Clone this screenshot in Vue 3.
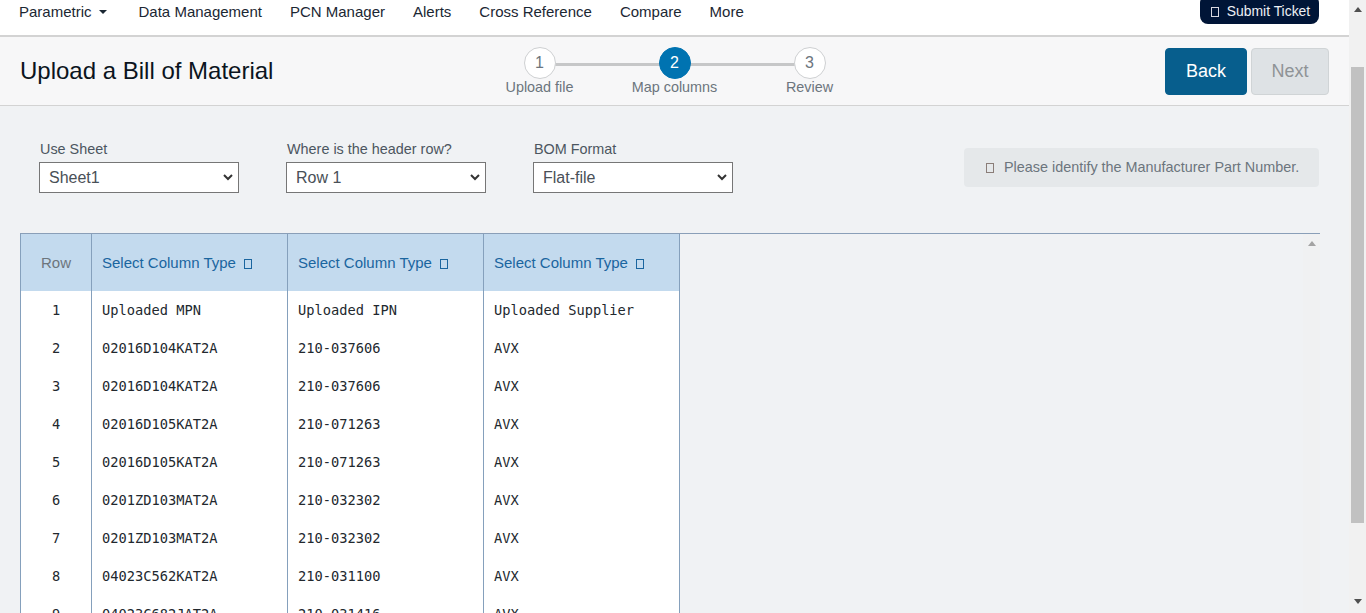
<script setup>
const navItems = ['Data Management', 'PCN Manager', 'Alerts', 'Cross Reference', 'Compare', 'More']

const steps = [
  { num: 1, label: 'Upload file' },
  { num: 2, label: 'Map columns', active: true },
  { num: 3, label: 'Review' },
]

const filters = [
  { label: 'Use Sheet', value: 'Sheet1' },
  { label: 'Where is the header row?', value: 'Row 1' },
  { label: 'BOM Format', value: 'Flat-file' },
]

const rows = [
  ['Uploaded MPN', 'Uploaded IPN', 'Uploaded Supplier'],
  ['02016D104KAT2A', '210-037606', 'AVX'],
  ['02016D104KAT2A', '210-037606', 'AVX'],
  ['02016D105KAT2A', '210-071263', 'AVX'],
  ['02016D105KAT2A', '210-071263', 'AVX'],
  ['0201ZD103MAT2A', '210-032302', 'AVX'],
  ['0201ZD103MAT2A', '210-032302', 'AVX'],
  ['04023C562KAT2A', '210-031100', 'AVX'],
  ['04023C682JAT2A', '210-031416', 'AVX'],
]
</script>

<template>
  <div class="shell">
    <div class="page">
      <nav class="topnav">
        <a class="nav-link">Parametric<span class="caret"></span></a>
        <a v-for="item in navItems" :key="item" class="nav-link">{{ item }}</a>
        <button class="ticket"><span class="tofu"></span>Submit Ticket</button>
      </nav>

      <header class="head">
        <h1>Upload a Bill of Material</h1>
        <ol class="stepper">
          <li v-for="step in steps" :key="step.num" class="step" :class="{ active: step.active }">
            <span class="circle">{{ step.num }}</span>
            <span class="step-label">{{ step.label }}</span>
          </li>
        </ol>
        <div class="actions">
          <button class="btn back">Back</button>
          <button class="btn next" disabled>Next</button>
        </div>
      </header>

      <main class="content">
        <div class="filters">
          <div v-for="f in filters" :key="f.label" class="field">
            <label>{{ f.label }}</label>
            <select>
              <option>{{ f.value }}</option>
            </select>
          </div>
          <div class="notice"><span class="tofu"></span>Please identify the Manufacturer Part Number.</div>
        </div>

        <div class="table-wrap">
          <table>
            <thead>
              <tr>
                <th class="row-col">Row</th>
                <th v-for="n in 3" :key="n">Select Column Type<span class="tofu"></span></th>
              </tr>
            </thead>
            <tbody>
              <tr v-for="(row, i) in rows" :key="i">
                <td class="row-col">{{ i + 1 }}</td>
                <td v-for="(cell, j) in row" :key="j">{{ cell }}</td>
              </tr>
            </tbody>
          </table>
          <div class="inner-scroll"><span class="arrow-up small"></span></div>
        </div>
      </main>
    </div>

    <div class="scrollbar">
      <span class="arrow-up"></span>
      <span class="thumb"></span>
      <span class="arrow-down"></span>
    </div>
  </div>
</template>

<style>
html, body {
  margin: 0;
  overflow: hidden;
}
</style>

<style scoped>
.shell {
  display: flex;
  height: 613px;
  overflow: hidden;
  font-family: "Liberation Sans", Arial, sans-serif;
  background: #f0f2f4;
}

.page {
  flex: 1;
  min-width: 0;
}

.topnav {
  display: flex;
  align-items: flex-start;
  gap: 28px;
  box-sizing: border-box;
  height: 37px;
  padding: 3px 30px 0 19px;
  background: #fff;
  border-bottom: 2px solid #d3d3d3;
}

.nav-link {
  font-size: 15px;
  line-height: 18px;
  color: #1b2733;
}

.caret {
  display: inline-block;
  margin: 0 4px 3px 7px;
  border-top: 4px solid #1b2733;
  border-left: 4px solid transparent;
  border-right: 4px solid transparent;
  vertical-align: middle;
}

.ticket {
  margin: -8px 0 0 auto;
  height: 29px;
  width: 119px;
  padding: 3px 0 0 2px;
  background: #001537;
  color: #eef1f5;
  border: 0;
  border-radius: 8px;
  font: 13.9px "Liberation Sans", Arial, sans-serif;
}

.ticket .tofu {
  margin-right: 8px;
  border-color: #d8d8e0;
}

.tofu {
  display: inline-block;
  width: 6px;
  height: 8px;
  border: 1px solid currentColor;
  vertical-align: -1px;
}

.head {
  display: grid;
  grid-template-columns: 1fr auto 1fr;
  align-items: center;
  box-sizing: border-box;
  height: 69px;
  padding: 0 20px;
  background: #f7f7f8;
  border-bottom: 1px solid #d3d3d3;
}

h1 {
  margin: 0;
  font-size: 24px;
  font-weight: 400;
  color: #0b1420;
}

.stepper {
  display: flex;
  margin: 0 0 2px;
  padding: 0;
  list-style: none;
}

.step {
  position: relative;
  display: flex;
  flex-direction: column;
  align-items: center;
  width: 135px;
  padding-top: 1px;
}

.step + .step::before {
  content: "";
  position: absolute;
  top: 17px;
  left: -50%;
  width: 100%;
  height: 3px;
  background: #c6c7c8;
}

.circle {
  position: relative;
  z-index: 1;
  box-sizing: border-box;
  width: 32px;
  height: 32px;
  border: 1px solid #ced0d2;
  border-radius: 50%;
  background: #fff;
  color: #6c757d;
  font-size: 16px;
  line-height: 29px;
  text-align: center;
}

.step.active .circle {
  background: #0073b1;
  border-color: #0073b1;
  color: #fff;
}

.step-label {
  font-size: 14.4px;
  line-height: 16px;
  color: #6c757d;
}

.actions {
  display: flex;
  justify-content: flex-end;
  gap: 4px;
}

.btn {
  box-sizing: border-box;
  height: 47px;
  border-radius: 4px;
  font: 18px "Liberation Sans", Arial, sans-serif;
}

.back {
  width: 82px;
  background: #075e8d;
  border: 1px solid #075e8d;
  color: #fff;
}

.next {
  width: 78px;
  background: #dee2e5;
  border: 1px solid #d0d4d6;
  color: #8f9396;
}

.content {
  padding: 35px 30px 0 20px;
}

.filters {
  display: flex;
  align-items: flex-start;
  gap: 47px;
  height: 92px;
  padding-left: 19px;
}

.field {
  display: flex;
  flex-direction: column;
  width: 200px;
}

.field label {
  padding-left: 1px;
  font-size: 14.4px;
  line-height: 16px;
  margin-bottom: 5px;
  color: #4c5660;
}

select {
  box-sizing: border-box;
  width: 200px;
  height: 31px;
  padding-left: 9px;
  appearance: none;
  background: #fff url("data:image/svg+xml,%3Csvg xmlns='http://www.w3.org/2000/svg' width='10' height='7'%3E%3Cpath d='M1 1l4 4 4-4' fill='none' stroke='%23333' stroke-width='2'/%3E%3C/svg%3E") no-repeat right 5px center;
  border: 1px solid #767676;
  border-radius: 0;
  font: 16px "Liberation Sans", Arial, sans-serif;
  color: #495057;
}

.notice {
  box-sizing: border-box;
  width: 355px;
  height: 39px;
  margin: 7px 0 0 auto;
  padding: 0 20px 0 22px;
  background: #e5e8ea;
  border-radius: 4px;
  font-size: 14.4px;
  line-height: 38px;
  color: #6c757d;
  white-space: nowrap;
}

.notice .tofu {
  margin-right: 10px;
  color: #8a7d78;
}

.table-wrap {
  position: relative;
  width: 1300px;
  border-top: 1px solid #8a9fb8;
}

table {
  table-layout: fixed;
  width: 660px;
  border-collapse: collapse;
  background: #fff;
}

th, td {
  width: 196px;
  border-left: 1px solid #85a0bc;
  border-right: 1px solid #85a0bc;
  box-sizing: border-box;
}

th {
  height: 57px;
  padding: 0 0 0 10px;
  background: #c3daee;
  border-top: 0;
  font-size: 15px;
  font-weight: 400;
  text-align: left;
  color: #1a659f;
}

th .tofu {
  margin-left: 8px;
}

td {
  height: 38px;
  padding: 0 0 0 10px;
  font: 13.7px "DejaVu Sans Mono", monospace;
  color: #22282e;
}

th.row-col, td.row-col {
  width: 71px;
  padding: 0;
  text-align: center;
}

th.row-col {
  color: #6c757d;
}

.inner-scroll {
  position: absolute;
  top: 0;
  right: 0;
  display: flex;
  justify-content: center;
  width: 17px;
  height: 380px;
  padding-top: 7px;
  box-sizing: border-box;
  background: #f0f1f2;
}

.scrollbar {
  display: flex;
  flex-direction: column;
  align-items: center;
  width: 17px;
  background: #f1f1f1;
}

.thumb {
  width: 13px;
  height: 456px;
  margin: 55px 0 76px;
  background: #c1c1c1;
}

.arrow-up {
  width: 0;
  height: 0;
  margin-top: 7px;
  border-bottom: 5px solid #505050;
  border-left: 4px solid transparent;
  border-right: 4px solid transparent;
}

.arrow-up.small {
  margin-top: 0;
  border-bottom-color: #a3a3a3;
}

.arrow-down {
  width: 0;
  height: 0;
  border-top: 5px solid #505050;
  border-left: 4px solid transparent;
  border-right: 4px solid transparent;
}
</style>
